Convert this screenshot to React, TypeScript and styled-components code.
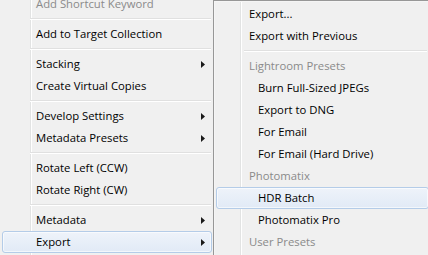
import React, { FC } from 'react';
import styled, { createGlobalStyle } from 'styled-components';

const GlobalStyle = createGlobalStyle`
  html, body {
    margin: 0;
    padding: 0;
    background: #f0f0f0;
  }
  body {
    font-family: 'Open Sans', 'Noto Sans', sans-serif;
    font-size: 11.3px;
    color: #000;
  }
`;

const Screen = styled.div`
  display: flex;
  width: 428px;
  height: 255px;
  overflow: hidden;
  background: #f0f0f0;
`;

const MainMenu = styled.div`
  display: flex;
  flex-direction: column;
  width: 213px;
  flex: none;
  margin-top: -7px;
  background: linear-gradient(
    to right,
    transparent 30px,
    #e2e3e3 30px,
    #e2e3e3 31px,
    #ffffff 31px,
    #ffffff 32px,
    transparent 32px
  );
`;

const SubMenu = styled.div`
  display: flex;
  flex-direction: column;
  width: 213px;
  flex: none;
  align-self: flex-start;
  border: 1px solid #979797;
  box-shadow: inset 0 0 0 1px #f5f5f5;
  padding: 2px 2px 40px;
  background:
    linear-gradient(
      to right,
      transparent 26px,
      #e2e3e3 26px,
      #e2e3e3 27px,
      #ffffff 27px,
      #ffffff 28px,
      transparent 28px
    ),
    #f0f0f0;
`;

const Item = styled.div<{ $active?: boolean; $disabled?: boolean; $indent?: number; $offset?: number }>`
  display: flex;
  align-items: center;
  box-sizing: border-box;
  height: 22px;
  margin-left: ${(p) => p.$offset ?? 0}px;
  padding-left: ${(p) => p.$indent ?? 33}px;
  padding-right: 6px;
  border: 1px solid ${(p) => (p.$active ? '#b4cce8' : 'transparent')};
  border-radius: 3px;
  background: ${(p) =>
    p.$active ? 'linear-gradient(to bottom, #eef3fa, #e1eaf6)' : 'transparent'};
  box-shadow: ${(p) => (p.$active ? 'inset 0 0 0 1px rgba(255,255,255,0.6)' : 'none')};
  color: ${(p) => (p.$disabled ? '#8a8a8a' : '#000')};
  white-space: nowrap;
  span {
    margin-top: -1px;
  }
`;

const Arrow = styled.svg`
  margin-left: auto;
  width: 4px;
  height: 7px;
  fill: #1a1a1a;
`;

const Separator = styled.div<{ $gutter: number }>`
  height: 8px;
  margin-left: ${(p) => p.$gutter}px;
  margin-right: 2px;
  display: flex;
  flex-direction: column;
  justify-content: center;
  &::before {
    content: '';
    height: 1px;
    background: #e0e0e0;
  }
  &::after {
    content: '';
    height: 1px;
    background: #ffffff;
  }
`;

type MenuRowProps = {
  label: string;
  sub?: boolean;
  active?: boolean;
  disabled?: boolean;
};

const MainRow: FC<MenuRowProps> = ({ label, sub, active, disabled }) => (
  <Item $offset={2} $indent={33} $active={active} $disabled={disabled} style={{ marginRight: 1 }}>
    <span>{label}</span>
    {sub && (
      <Arrow viewBox='0 0 4 7'>
        <path d='M0 0L4 3.5L0 7Z' />
      </Arrow>
    )}
  </Item>
);

const App: FC = () => (
  <>
    <GlobalStyle />
    <Screen>
      <MainMenu>
        <MainRow label='Add Shortcut Keyword' disabled />
        <Separator $gutter={30} />
        <MainRow label='Add to Target Collection' />
        <Separator $gutter={30} />
        <MainRow label='Stacking' sub />
        <MainRow label='Create Virtual Copies' />
        <Separator $gutter={30} />
        <MainRow label='Develop Settings' sub />
        <MainRow label='Metadata Presets' sub />
        <Separator $gutter={30} />
        <MainRow label='Rotate Left (CCW)' />
        <MainRow label='Rotate Right (CW)' />
        <Separator $gutter={30} />
        <MainRow label='Metadata' sub />
        <MainRow label='Export' sub active />
      </MainMenu>
      <SubMenu>
        <Item $indent={32}><span>Export...</span></Item>
        <Item $indent={32}><span>Export with Previous</span></Item>
        <Separator $gutter={28} />
        <Item $indent={32} $disabled><span>Lightroom Presets</span></Item>
        <Item $indent={41}><span>Burn Full-Sized JPEGs</span></Item>
        <Item $indent={41}><span>Export to DNG</span></Item>
        <Item $indent={41}><span>For Email</span></Item>
        <Item $indent={41}><span>For Email (Hard Drive)</span></Item>
        <Item $indent={32} $disabled><span>Photomatix</span></Item>
        <Item $indent={41} $active><span>HDR Batch</span></Item>
        <Item $indent={41}><span>Photomatix Pro</span></Item>
        <Item $indent={32} $disabled><span>User Presets</span></Item>
      </SubMenu>
    </Screen>
  </>
);

export default App;
